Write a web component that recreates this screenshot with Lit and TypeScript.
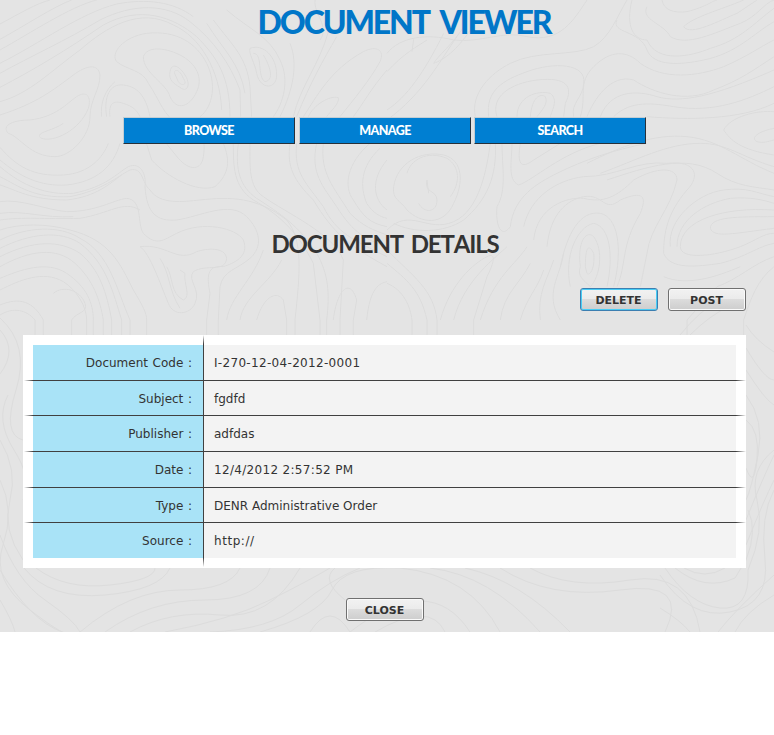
import { LitElement, html, css, svg } from "lit";
import { customElement } from "lit/decorators.js";

// Contour lines of the topographic backdrop, in thirds of a pixel.
const WEST = [
  "M0 72 C60 40 110 10 150 0", "M0 118 C70 80 160 20 215 0", "M0 150 C90 100 210 20 290 0", "M0 190 C120 130 240 40 350 12 C440 -5 520 5 580 50",
  "M0 220 C90 170 200 120 300 60 C400 10 500 10 570 65 C640 120 690 190 720 270 L722 350",
  "M0 262 C100 210 200 150 310 75 C420 15 520 50 590 110 C650 170 690 230 690 350",
  "M0 305 C90 280 150 215 240 150 C320 80 420 20 520 75 C600 110 660 210 665 330",
  "M0 345 C110 310 160 270 220 225 C260 195 295 190 300 225 C300 270 270 300 270 350 C270 410 210 470 165 470 C90 470 60 410 25 400 C5 380 30 360 90 360 C170 350 200 310 230 290 C260 270 275 290 265 325 C240 390 160 430 122 414 C105 395 155 395 190 370",
  "M350 185 C330 160 370 110 440 100 C530 90 590 130 620 190 C650 250 640 320 600 350",
  "M350 185 C380 210 430 210 445 250 C480 300 490 350 540 375 C600 380 620 410 610 470 C605 510 570 515 535 475 L500 432",
  "M430 170 C440 140 490 140 540 165 C590 190 610 235 590 275 C570 320 530 335 510 290 C500 250 430 220 430 170Z",
  "M510 215 C515 185 540 200 555 225 C575 255 560 280 540 262 C520 250 505 240 510 215Z", "M523 218 C525 205 540 210 550 235 C565 255 545 260 535 245Z",
  "M320 350 C310 290 330 250 370 255 C420 260 440 300 450 350", "M305 350 C300 310 315 270 345 245", "M330 350 C325 310 340 300 370 310 C400 320 410 330 420 350",
  "M0 442 C50 500 100 530 190 525 C270 520 310 470 325 430", "M0 480 C60 530 120 560 200 555 C290 545 340 500 360 430",
  "M0 500 C70 560 140 585 220 580 C320 560 350 520 385 500 C420 485 440 520 435 560 C440 640 470 665 530 660 C600 650 690 600 740 650 C780 690 790 740 750 775 C710 810 670 810 660 860 L655 960",
  "M0 530 C60 560 100 595 210 590 C310 570 350 530 390 510 C430 500 425 550 450 570 C480 615 550 605 600 600 C690 590 770 590 860 660 C910 720 900 820 885 960",
  "M0 555 C50 570 90 600 200 600 C290 590 330 550 365 525", "M0 605 C60 595 140 630 200 635 C290 635 340 600 380 595 C430 600 410 670 430 700 C470 740 490 720 530 700 C610 660 710 685 730 720 C750 770 700 790 670 800 C620 795 620 830 630 880 L620 960",
  "M0 640 C70 630 130 655 220 650", "M0 660 C70 650 130 658 240 655 C330 640 370 600 420 630", "M0 690 C60 670 140 670 210 690 C330 720 360 790 400 870 C430 920 440 940 440 960",
  "M0 720 C80 680 180 675 240 715 C330 760 350 870 390 960", "M0 745 C90 700 180 690 240 730 C320 790 340 880 365 960", "M0 770 C100 720 180 720 240 760 C300 810 320 880 335 960",
  "M0 800 C90 750 170 740 225 790 C280 840 300 900 310 960", "M0 835 C60 810 140 780 200 820 C260 860 280 910 280 960", "M0 870 C60 840 130 810 190 845 C230 870 260 920 260 960",
  "M0 915 C60 890 100 905 130 960", "M160 880 C190 855 240 870 255 910 C265 940 230 935 215 960", "M0 945 C40 920 80 930 105 960",
  "M420 740 C450 760 480 850 505 910 C520 950 570 945 585 910 C605 870 560 840 580 815 C620 790 675 820 680 775 C675 740 620 745 590 755 C530 790 500 730 420 740Z",
  "M500 800 C520 830 510 880 550 900 C575 890 550 850 555 820 L540 810", "M480 775 C510 820 505 870 540 925",
  "M640 60 C700 140 740 170 750 260 L755 350", "M620 70 C670 150 720 190 735 280", "M680 30 C750 90 810 110 840 180 C870 240 850 310 820 350",
  "M750 145 C790 130 830 170 830 225 C830 270 780 270 770 220 C765 190 745 160 750 145Z", "M760 160 C790 160 770 230 795 245 C830 240 800 180 790 165",
  "M870 130 C895 190 880 270 840 350", "M910 350 C950 290 990 210 1090 155 C1130 135 1155 150 1140 185 C1110 240 1060 300 1020 350", "M890 350 C930 250 970 180 1010 110",
  "M925 350 C940 315 990 285 1015 293 C1020 310 990 335 980 350", "M880 350 C900 260 960 190 985 95", "M960 120 C990 80 940 40 945 0", "M1161 210 C1110 270 1090 310 1060 350",
  "M670 430 C690 480 690 520 645 560 C590 580 500 530 455 480 L440 432", "M700 430 C700 500 700 560 760 600 C850 650 900 710 940 790 L960 960",
  "M715 430 C705 510 720 560 770 595 C840 640 900 680 950 760 C985 820 990 880 980 960", "M750 430 C750 500 745 560 790 590 C860 640 1000 700 1030 780 L1020 960",
  "M870 430 C860 500 880 540 940 600 C1000 700 1050 740 1161 800", "M890 430 C880 520 920 550 970 620 C1010 700 1060 720 1161 770", "M950 430 C930 520 970 560 1010 620 C1060 700 1100 720 1161 740",
  "M970 430 C960 520 1000 560 1050 640 C1090 680 1120 690 1161 705", "M1110 430 C1040 490 1030 560 1060 600 C1090 650 1110 670 1161 680", "M1140 445 C1080 500 1080 560 1100 610 C1120 640 1140 650 1161 655",
  "M1161 480 C1110 540 1120 600 1161 630", "M680 960 C690 890 760 840 790 750", "M770 960 C790 890 830 870 850 900 L860 960", "M720 960 C730 890 810 850 845 780", "M1000 960 C1010 870 1050 830 1070 900 L1060 960", "M1100 960 C1110 860 1140 850 1161 845",
];

const EAST = [
  "M0 160 C40 110 120 100 200 120 C280 130 350 90 420 110 C520 130 560 60 600 0", "M75 155 L80 118 M0 330 C60 290 110 220 170 100", "M0 215 C50 160 90 140 120 120",
  "M0 360 C110 280 160 180 210 110", "M140 190 C150 170 200 130 230 80 M140 190 C170 180 210 150 250 90",
  "M265 350 C250 280 310 220 370 190 C450 150 560 170 620 140 C670 110 690 50 720 0", "M305 350 C295 270 350 240 420 215 C500 185 600 190 590 250 C590 290 550 310 560 350",
  "M330 350 C310 290 370 250 450 240 C540 230 560 260 535 310 L530 350", "M390 350 C390 290 450 270 490 280 C515 300 495 330 490 350", "M430 350 C435 290 460 280 475 290 C485 310 465 330 450 350",
  "M580 350 C600 290 570 250 620 200 C670 150 720 150 760 190 C830 240 930 230 1010 200 C1080 170 1120 140 1161 120", "M600 350 C620 300 670 220 740 240 C800 280 900 310 980 270 C1060 240 1100 210 1161 170",
  "M640 350 C670 270 750 270 810 290 C880 310 980 290 1161 210", "M680 350 C730 300 800 310 860 320 C980 340 1080 300 1161 260", "M690 60 C670 100 760 90 780 150 C800 200 880 195 950 180 C1050 160 1100 100 1161 65",
  "M735 0 C715 80 740 120 780 120 C810 190 910 170 970 145 C1060 120 1100 70 1161 25", "M780 20 C760 60 830 70 850 110 C900 140 980 100 1060 70 C1110 50 1130 10 1161 0",
  "M825 0 C830 30 860 40 900 35 C960 20 980 0 990 0", "M890 80 C920 50 1000 30 1070 0 M890 80 C910 110 1000 60 1050 40 L1110 0", "M780 350 C900 360 1060 360 1161 310", "M1010 390 C1030 350 1110 330 1161 335 M1010 390 C1030 420 1060 450 1161 465",
  "M1161 385 C1110 395 1090 415 1110 425 C1130 430 1140 425 1161 420",
  "M20 560 C30 490 100 450 170 465 C230 480 230 550 200 610 C170 680 100 670 60 630 C40 600 15 600 20 560Z", "M60 520 C70 480 120 450 180 475 C220 500 220 550 190 590", "M120 540 C110 580 150 570 150 600 C150 640 110 640 95 610 M120 540 L125 580",
  "M0 690 C70 620 120 700 200 665 C280 630 300 500 310 430", "M20 670 C80 700 170 700 230 660 C300 600 330 530 325 430", "M0 790 C60 840 100 870 120 960", "M0 850 C50 870 70 920 75 960", "M0 750 C80 830 140 870 150 960",
  "M345 430 C345 500 360 570 330 620 C325 670 340 720 370 680 C380 590 450 550 510 520 C590 480 680 450 780 430", "M375 430 C375 480 360 540 395 555 C440 540 520 460 640 430", "M400 430 C390 490 400 510 440 480 L520 430",
  "M410 680 C430 590 510 540 590 530 C690 530 750 480 840 490 C930 480 940 530 900 570 C840 640 830 700 830 760 C850 810 930 800 1000 790 C1080 770 1110 740 1161 730",
  "M440 720 C450 620 540 590 590 595 C650 610 690 590 740 540 C810 500 870 500 870 540 C850 630 790 680 780 760 L760 860", "M480 740 C490 640 540 600 590 590 C650 580 650 640 700 600 C770 570 780 590 760 640 C700 740 720 790 690 860",
  "M520 800 C540 700 580 630 640 640 C690 650 710 740 680 860", "M550 860 C530 770 570 680 620 670 C670 680 680 770 660 860", "M580 800 C570 720 600 690 620 710 C650 750 640 830 610 860 C590 840 570 830 580 800Z", "M595 800 C595 740 605 730 620 760 C625 800 610 830 600 820Z",
  "M850 740 C840 660 930 580 1010 570 C1080 560 1110 580 1161 590", "M870 740 C870 660 950 610 1030 595 C1090 590 1130 600 1161 610", "M880 740 C880 780 980 770 1060 740 C1110 720 1130 700 1161 700 M880 740 C880 660 1010 620 1161 630",
  "M970 685 C970 650 1050 650 1161 650 M970 685 C980 715 1040 700 1161 685", "M640 520 C750 480 840 430 940 430 C1020 430 1060 470 1161 500", "M600 490 C700 440 800 400 900 410 C1000 420 1060 480 1161 520", "M660 540 C780 500 900 460 990 520 C1050 560 1100 560 1161 570",
  "M160 960 C190 850 260 790 300 770 C320 760 330 770 300 830 L260 960", "M200 960 C230 840 330 770 360 740", "M280 960 C320 830 390 790 420 740", "M340 960 C350 880 400 850 430 790", "M400 960 C420 890 450 870 470 810", "M460 960 C450 880 480 840 500 780", "M520 960 C470 880 520 830 530 760",
  "M1161 770 C1100 790 1050 840 990 860 L900 960", "M1161 800 C1110 840 1090 900 1070 960", "M830 830 C900 860 990 830 1060 800",
];

// Strip beneath the panel and the margins beside it, in pixels.
const SOUTH = [
  "M0 330 Q18 350 0 374", "M0 318 Q30 345 16 390 T23 440", "M8 395 Q-5 420 14 450 T23 500", "M0 440 Q18 470 10 500 T23 560", "M0 480 Q15 510 3 545 T30 610 T70 632", "M0 535 Q16 580 45 600 T80 632",
  "M0 570 Q30 620 62 632", "M24 568 Q50 600 105 595 T170 568", "M36 568 Q65 590 110 585 T155 568", "M0 600 Q12 620 15 632", "M80 632 Q130 590 180 590 T240 568", "M105 632 Q150 600 205 600 T270 568",
  "M130 632 Q170 610 220 615 T300 568", "M165 632 Q230 620 270 600 T330 568", "M210 632 Q270 630 300 605 T360 568", "M260 632 Q320 615 332 590 T400 568", "M310 632 Q330 600 350 632", "M345 600 Q320 580 335 568",
  "M350 632 Q430 570 470 632", "M375 632 Q430 600 445 632", "M400 568 Q470 575 500 632", "M430 568 Q490 575 540 632", "M465 568 Q520 580 570 632", "M500 568 Q550 600 620 590 T665 632", "M530 568 Q570 590 630 580 T700 632",
  "M665 568 Q690 605 720 608 T748 570 Q765 530 757 500 T774 450", "M675 568 Q705 592 735 578 L746 560 Q758 530 748 510", "M684 568 Q705 580 725 568", "M660 575 Q690 620 730 612 T765 560 T774 490", "M660 608 Q680 620 690 632", "M718 632 Q735 610 774 575", "M735 632 Q745 612 774 595",
  "M746 348 Q765 380 774 380", "M746 325 Q755 340 774 352", "M746 395 Q765 420 758 455 T746 500", "M746 420 Q760 430 757 460 T746 468", "M746 520 Q762 480 774 455", "M746 545 Q764 500 774 480", "M680 335 Q700 310 720 300", "M690 335 Q710 315 730 306", "M746 370 Q765 400 774 405",
];

// Lines that leave the upper area carry on down behind the panel.
const toPanel = (d: string) => (d.endsWith(" 960") ? `${d} v45` : d);

const FIELDS = [
  ["Document Code", "I-270-12-04-2012-0001", "digits"],
  ["Subject", "fgdfd", ""],
  ["Publisher", "adfdas", ""],
  ["Date", "12/4/2012 2:57:52 PM", "digits"],
  ["Type", "DENR Administrative Order", ""],
  ["Source", "http://", "url"],
];

@customElement("app-root")
export class AppRoot extends LitElement {
  static styles = css`
    :host { display: block; height: 735px; background: #fff; overflow: hidden; }
    .page { display: grid; width: 774px; height: 632px; background: #e4e4e4; overflow: hidden; color: #333; }
    .topo, .content { grid-area: 1 / 1; min-width: 0; }
    .topo { width: 774px; height: 632px; fill: none; stroke: #dcdcdc; }
    .content { z-index: 1; display: flex; flex-direction: column; width: 774px; height: 632px; }
    h1, h2 { margin: 0; font-family: Lato, sans-serif; text-align: center; white-space: nowrap; font-kerning: none; }
    h1 { height: 44px; padding-left: 34px; line-height: 43px; font-size: 32px; font-weight: 900; color: #0076c8; letter-spacing: -2.1px; word-spacing: 5px; }
    h2 { height: 40px; margin-top: 80px; padding-right: 4px; line-height: 39px; font-size: 24px; font-weight: 700; letter-spacing: -1.15px; word-spacing: 3px; }
    nav { display: flex; gap: 3px; margin: 73px 0 0 123px; }
    nav a { box-sizing: border-box; width: 172px; height: 27px; border: 1px solid; border-color: #c3cdd3 #26303a #26303a #c3cdd3; background: #007fd2; color: #fff; font: 900 12.5px/25px Lato, sans-serif; letter-spacing: -.6px; text-align: center; }
    nav a:first-child { margin-right: 1px; }
    .actions { display: flex; justify-content: flex-end; gap: 10px; margin: 24px 28px 0 0; }
    button { box-sizing: border-box; width: 78px; height: 23px; padding: 2px 1px 0 0; border: 1px solid #707070; border-radius: 3px; box-shadow: inset 0 0 0 1px #fafafa; background: linear-gradient(#f2f2f2 0, #ebebeb 48%, #dcdcdc 50%, #cdcdcd 100%); color: #333; font: bold 11px/19px "DejaVu Sans", sans-serif; }
    .focused { border-color: #3c7fb1; box-shadow: inset 0 0 0 1px #48cdf5; }
    .panel { display: grid; grid-template-columns: 10px 170px 1px 532px 10px; grid-template-rows: 10px 36px 35px 36px 36px 35px 35px 10px; width: 723px; height: 233px; margin: 24px 0 0 23px; background: #fff; }
    .label, .value { padding-top: 1px; font: 12px/34px "DejaVu Sans", sans-serif; white-space: nowrap; }
    .label { grid-column: 2; background: #a9e3f7; text-align: right; padding-right: 11px; word-spacing: .8px; }
    .value { grid-column: 4; background: #f3f3f3; padding-left: 10px; }
    .digits { letter-spacing: .32px; }
    .url { letter-spacing: .55px; }
    .rule { grid-column: 1 / -1; align-self: end; height: 1px; margin: 0 0 0 1px; background: linear-gradient(90deg, transparent, #404040 9px, #404040 calc(100% - 10px), transparent); }
    .divider { grid-area: 1 / 3 / -1 / 4; margin: 0 0 1px; background: linear-gradient(transparent, #404040 9px, #404040 calc(100% - 9px), transparent); }
    .close { align-self: center; margin: 30px 4px 0 0; }
  `;

  render() {
    return html`
      <main class="page">
        <svg class="topo" viewBox="0 0 774 632" aria-hidden="true">
          <g transform="scale(.33333)" stroke-width="3">${WEST.map((d) => svg`<path d=${toPanel(d)} />`)}</g>
          <g transform="translate(387) scale(.33333)" stroke-width="3">${EAST.map((d) => svg`<path d=${toPanel(d)} />`)}</g>
          <g>${SOUTH.map((d) => svg`<path d=${d} />`)}</g>
        </svg>
        <div class="content">
          <h1>DOCUMENT VIEWER</h1>
          <nav><a>BROWSE</a><a>MANAGE</a><a>SEARCH</a></nav>
          <h2>DOCUMENT DETAILS</h2>
          <div class="actions"><button class="focused">DELETE</button><button>POST</button></div>
          <section class="panel">
            ${FIELDS.map(([name, value, kind], i) => html`
              <div class="label" style="grid-row:${i + 2}">${name} :</div>
              <div class="value ${kind}" style="grid-row:${i + 2}">${value}</div>
              ${i < FIELDS.length - 1 ? html`<div class="rule" style="grid-row:${i + 2}"></div>` : ""}
            `)}
            <div class="divider"></div>
          </section>
          <button class="close">CLOSE</button>
        </div>
      </main>
    `;
  }
}
